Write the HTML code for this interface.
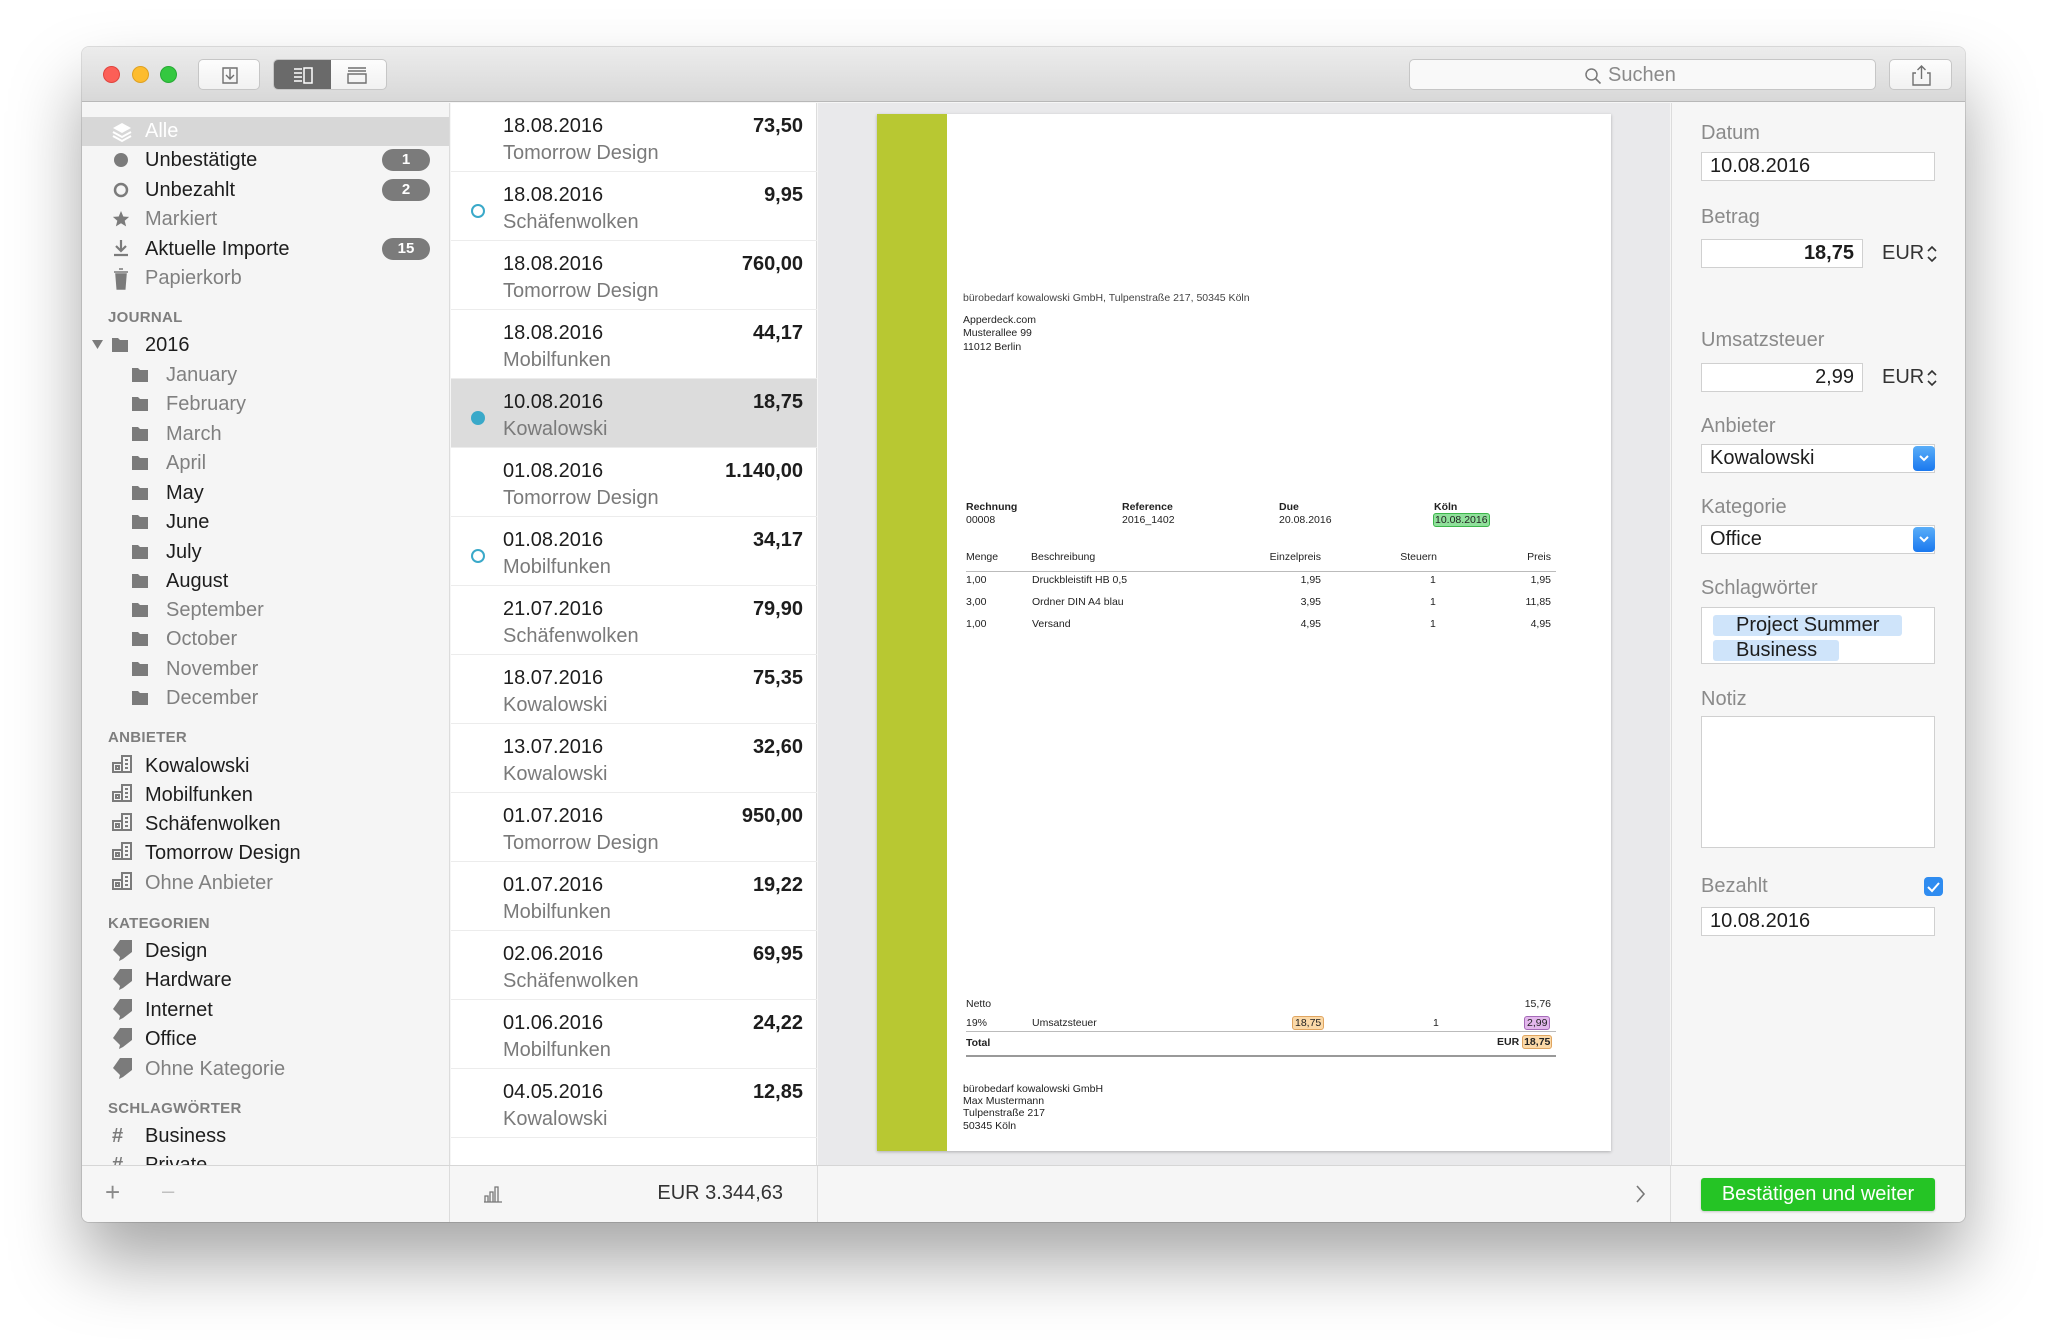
<!DOCTYPE html>
<html><head><meta charset="utf-8">
<style>
*{margin:0;padding:0;box-sizing:border-box}
body{width:2047px;height:1341px;background:#fff;font-family:"Liberation Sans",sans-serif;position:relative;overflow:hidden}
.abs{position:absolute}
.win{position:absolute;left:82px;top:47px;width:1883px;height:1175px;border-radius:7px;background:#f6f6f6;overflow:hidden;box-shadow:0 40px 70px rgba(0,0,0,.35),0 0 0 1px rgba(0,0,0,.12)}
.tb{position:absolute;left:0;top:0;width:100%;height:55px;background:linear-gradient(#ececec,#d8d8d8);border-bottom:1px solid #b8b8b8}
.light{position:absolute;top:19px;width:17px;height:17px;border-radius:50%}
.btn{position:absolute;top:12px;height:31px;background:linear-gradient(#fdfdfd,#f1f1f1);border:1px solid #c6c6c6;border-radius:5px}
.side{position:absolute;left:0;top:56px;width:368px;height:1062px;background:#f5f5f5;border-right:1px solid #dcdcdc;overflow:hidden}
.sc{position:absolute;left:0;top:2px;width:368px;height:1062px}
.si{position:absolute;font-size:20px;color:#1d1d1d;line-height:22px;white-space:nowrap}
.si.g{color:#808080}
.hd{position:absolute;font-size:15px;color:#7e7e7e;font-weight:bold;letter-spacing:.3px}
.badge{position:absolute;left:300px;width:48px;height:22px;border-radius:11px;background:#7b7b7b;color:#fff;font-size:15px;font-weight:bold;text-align:center;line-height:22px}
.list{position:absolute;left:369px;top:56px;width:366px;height:1062px;background:#fff;border-right:1px solid #dcdcdc}
.row{position:absolute;left:0;width:366px;height:69px;border-bottom:1px solid #ececec}
.row .d{position:absolute;left:52px;top:12px;font-size:20px;color:#1d1d1d}
.row .a{position:absolute;right:14px;top:12px;font-size:20px;font-weight:bold;color:#1d1d1d}
.row .n{position:absolute;left:52px;top:39px;font-size:20px;color:#7a7a7a}
.dot{position:absolute;left:20px;top:32px;width:14px;height:14px;border-radius:50%}
.prev{position:absolute;left:736px;top:56px;width:852px;height:1062px;background:#e9e9eb}
.right{position:absolute;left:1589px;top:56px;width:294px;height:1062px;background:#f6f6f6;border-left:1px solid #dcdcdc}
.lbl{position:absolute;left:29px;font-size:20px;color:#8a8a8a}
.fld{position:absolute;left:29px;width:234px;height:29px;background:#fff;border:1px solid #d0d0d0;font-size:20px;color:#1d1d1d;padding:2px 8px}
.bot{position:absolute;left:0;top:1118px;width:100%;height:57px;background:#f6f6f6;border-top:1px solid #d6d6d6}
.doc{position:absolute;left:877px;top:114px;width:734px;height:1037px;background:#fff;box-shadow:0 1px 3px rgba(0,0,0,.25)}
.t{position:absolute;font-size:10.5px;color:#222;white-space:nowrap;line-height:12px}
.tb2{font-weight:bold}
.r{text-align:right}
.sel{position:absolute;width:22px;height:25px;border-radius:4px;background:linear-gradient(#5aaef8,#1a78ef);right:-1px;top:1px}
</style></head><body>
<div class="win">
 <div class="tb">
  <div class="light" style="left:21px;background:#fc5f57;border:1px solid #e0443e"></div>
  <div class="light" style="left:50px;background:#fdbc2e;border:1px solid #dea123"></div>
  <div class="light" style="left:78px;background:#34c840;border:1px solid #27aa35"></div>
  <div class="btn" style="left:116px;width:62px"><svg width="62" height="31" viewBox="0 0 62 31"><path d="M24 8h14v15H24z M31 9v10 M27 15l4 4 4-4" fill="none" stroke="#707070" stroke-width="1.4"/></svg></div>
  <div class="btn" style="left:191px;width:114px;overflow:hidden">
   <div style="position:absolute;left:0;top:0;width:57px;height:100%;background:#6a6a6a"></div>
   <svg class="abs" style="left:0;top:0" width="114" height="31"><path d="M20 9h8M20 13h8M20 17h8M20 21h8M30 8h8v15h-8z" fill="none" stroke="#fff" stroke-width="1.5"/><path d="M74 8h18M74 11h18M74 14h18v9H74z" fill="none" stroke="#707070" stroke-width="1.4"/></svg>
  </div>
  <div class="btn" style="left:1327px;width:467px;background:#f9f9f9"><svg class="abs" style="left:174px;top:7px" width="18" height="18"><circle cx="7.5" cy="7.5" r="5.5" fill="none" stroke="#7a7a7a" stroke-width="1.5"/><path d="M11.5 11.5l5 5" stroke="#7a7a7a" stroke-width="1.6"/></svg><span class="abs" style="left:198px;top:4px;font-size:20px;color:#8a8a8a">Suchen</span></div>
  <div class="btn" style="left:1807px;width:63px"><svg width="63" height="31"><path d="M26 13h-3v12h17V13h-3 M31.5 19V6 M27.5 10l4-4 4 4" fill="none" stroke="#707070" stroke-width="1.4"/></svg></div>
 </div>

 <div class="side"><div class="sc">
  <div class="abs" style="left:0;top:12px;width:368px;height:29px;background:#d7d7d7"></div>
  <svg class="abs" style="left:28px;top:15px" width="24" height="24"><path d="M12 3l9 5-9 5-9-5z" fill="#fff"/><path d="M3 12l9 5 9-5M3 16l9 5 9-5" fill="none" stroke="#fff" stroke-width="2"/></svg>
  <div class="si" style="left:63px;top:15px;color:#fff">Alle</div>
  <svg class="abs" style="left:30px;top:45px" width="22" height="140"><circle cx="9" cy="10" r="7" fill="#7b7b7b"/><circle cx="9" cy="40" r="6" fill="none" stroke="#7b7b7b" stroke-width="2.5"/><path d="M9 61l2.3 5.5 5.8.4-4.4 3.8 1.4 5.7-5.1-3.1-5.1 3.1 1.4-5.7-4.4-3.8 5.8-.4z" fill="#7b7b7b"/><path d="M9 90v11M4 96l5 5 5-5M2 105h14" fill="none" stroke="#7b7b7b" stroke-width="2.2"/><path d="M2 122h14M4 124h10l-1.2 15H5.2z M7 119h4" fill="#7b7b7b" stroke="#7b7b7b" stroke-width="1.5"/></svg>
  <div class="si" style="left:63px;top:44px">Unbestätigte</div>
  <div class="si" style="left:63px;top:74px">Unbezahlt</div>
  <div class="si g" style="left:63px;top:103px">Markiert</div>
  <div class="si" style="left:63px;top:133px">Aktuelle Importe</div>
  <div class="si g" style="left:63px;top:162px">Papierkorb</div>
  <div class="badge" style="top:44px">1</div>
  <div class="badge" style="top:74px">2</div>
  <div class="badge" style="top:133px">15</div>
  <div class="hd" style="left:26px;top:204px">JOURNAL</div>
  <svg class="abs" style="left:9px;top:234px" width="14" height="12"><path d="M1 1h11L6.5 10z" fill="#7b7b7b"/></svg>
  <div class="si" style="left:63px;top:229px">2016</div>
  <div class="si g" style="left:84px;top:259px">January</div>
  <div class="si g" style="left:84px;top:288px">February</div>
  <div class="si g" style="left:84px;top:318px">March</div>
  <div class="si g" style="left:84px;top:347px">April</div>
  <div class="si" style="left:84px;top:377px">May</div>
  <div class="si" style="left:84px;top:406px">June</div>
  <div class="si" style="left:84px;top:436px">July</div>
  <div class="si" style="left:84px;top:465px">August</div>
  <div class="si g" style="left:84px;top:494px">September</div>
  <div class="si g" style="left:84px;top:523px">October</div>
  <div class="si g" style="left:84px;top:553px">November</div>
  <div class="si g" style="left:84px;top:582px">December</div>
  <svg class="abs" style="left:0;top:223px" width="90" height="380"><g fill="#7b7b7b">
   <path d="M30 10h6l2 2h8v12H30z"/>
   <path d="M50 40h6l2 2h8v12H50z"/><path d="M50 69h6l2 2h8v12H50z"/><path d="M50 99h6l2 2h8v12H50z"/><path d="M50 128h6l2 2h8v12H50z"/><path d="M50 158h6l2 2h8v12H50z"/><path d="M50 187h6l2 2h8v12H50z"/><path d="M50 217h6l2 2h8v12H50z"/><path d="M50 246h6l2 2h8v12H50z"/><path d="M50 275h6l2 2h8v12H50z"/><path d="M50 304h6l2 2h8v12H50z"/><path d="M50 334h6l2 2h8v12H50z"/><path d="M50 363h6l2 2h8v12H50z"/></g></svg>
  <div class="hd" style="left:26px;top:624px">ANBIETER</div>
  <div class="si" style="left:63px;top:650px">Kowalowski</div>
  <div class="si" style="left:63px;top:679px">Mobilfunken</div>
  <div class="si" style="left:63px;top:708px">Schäfenwolken</div>
  <div class="si" style="left:63px;top:737px">Tomorrow Design</div>
  <div class="si g" style="left:63px;top:767px">Ohne Anbieter</div>
  <svg class="abs" style="left:28px;top:647px" width="26" height="150"><g fill="none" stroke="#7b7b7b" stroke-width="2"><path d="M2 20h20M3 20v-9h9v9M12 20V4h9v16M6 14h3v3H6zM15 8h3M15 12h3M15 16h3"/><path d="M2 49h20M3 49v-9h9v9M12 49V33h9v16M6 43h3v3H6zM15 37h3M15 41h3M15 45h3"/><path d="M2 78h20M3 78v-9h9v9M12 78V62h9v16M6 72h3v3H6zM15 66h3M15 70h3M15 74h3"/><path d="M2 107h20M3 107v-9h9v9M12 107V91h9v16M6 101h3v3H6zM15 95h3M15 99h3M15 103h3"/><path d="M2 137h20M3 137v-9h9v9M12 137v-16h9v16M6 131h3v3H6zM15 125h3M15 129h3M15 133h3"/></g></svg>
  <div class="hd" style="left:26px;top:810px">KATEGORIEN</div>
  <div class="si" style="left:63px;top:835px">Design</div>
  <div class="si" style="left:63px;top:864px">Hardware</div>
  <div class="si" style="left:63px;top:894px">Internet</div>
  <div class="si" style="left:63px;top:923px">Office</div>
  <div class="si g" style="left:63px;top:953px">Ohne Kategorie</div>
  <svg class="abs" style="left:28px;top:833px" width="26" height="150"><g fill="#7b7b7b"><path d="M10 2h12v12l-9 7-4 2 1-4-7-7z"/><path d="M10 31h12v12l-9 7-4 2 1-4-7-7z"/><path d="M10 61h12v12l-9 7-4 2 1-4-7-7z"/><path d="M10 90h12v12l-9 7-4 2 1-4-7-7z"/><path d="M10 120h12v12l-9 7-4 2 1-4-7-7z"/></g></svg>
  <div class="hd" style="left:26px;top:995px">SCHLAGWÖRTER</div>
  <div class="si" style="left:30px;top:1020px;color:#7b7b7b;font-weight:bold">#</div>
  <div class="si" style="left:63px;top:1020px">Business</div>
  <div class="si" style="left:30px;top:1049px;color:#7b7b7b;font-weight:bold">#</div>
  <div class="si" style="left:63px;top:1049px">Private</div>
 </div></div>

 <div class="list">
  <div class="row" style="top:0"><div class="d">18.08.2016</div><div class="a">73,50</div><div class="n">Tomorrow Design</div></div>
  <div class="row" style="top:69px"><div class="d">18.08.2016</div><div class="a">9,95</div><div class="n">Schäfenwolken</div><div class="dot" style="border:2.5px solid #3aa9c9"></div></div>
  <div class="row" style="top:138px"><div class="d">18.08.2016</div><div class="a">760,00</div><div class="n">Tomorrow Design</div></div>
  <div class="row" style="top:207px"><div class="d">18.08.2016</div><div class="a">44,17</div><div class="n">Mobilfunken</div></div>
  <div class="row" style="top:276px;background:#dcdcdc"><div class="d">10.08.2016</div><div class="a">18,75</div><div class="n">Kowalowski</div><div class="dot" style="background:#3aa9c9"></div></div>
  <div class="row" style="top:345px"><div class="d">01.08.2016</div><div class="a">1.140,00</div><div class="n">Tomorrow Design</div></div>
  <div class="row" style="top:414px"><div class="d">01.08.2016</div><div class="a">34,17</div><div class="n">Mobilfunken</div><div class="dot" style="border:2.5px solid #3aa9c9"></div></div>
  <div class="row" style="top:483px"><div class="d">21.07.2016</div><div class="a">79,90</div><div class="n">Schäfenwolken</div></div>
  <div class="row" style="top:552px"><div class="d">18.07.2016</div><div class="a">75,35</div><div class="n">Kowalowski</div></div>
  <div class="row" style="top:621px"><div class="d">13.07.2016</div><div class="a">32,60</div><div class="n">Kowalowski</div></div>
  <div class="row" style="top:690px"><div class="d">01.07.2016</div><div class="a">950,00</div><div class="n">Tomorrow Design</div></div>
  <div class="row" style="top:759px"><div class="d">01.07.2016</div><div class="a">19,22</div><div class="n">Mobilfunken</div></div>
  <div class="row" style="top:828px"><div class="d">02.06.2016</div><div class="a">69,95</div><div class="n">Schäfenwolken</div></div>
  <div class="row" style="top:897px"><div class="d">01.06.2016</div><div class="a">24,22</div><div class="n">Mobilfunken</div></div>
  <div class="row" style="top:966px"><div class="d">04.05.2016</div><div class="a">12,85</div><div class="n">Kowalowski</div></div>
 </div>

 <div class="prev"></div>

 <div class="right">
  <div class="lbl" style="top:19px">Datum</div>
  <div class="fld" style="top:49px">10.08.2016</div>
  <div class="lbl" style="top:103px">Betrag</div>
  <div class="fld" style="top:136px;width:162px;text-align:right;font-weight:bold">18,75</div>
  <div class="abs" style="left:210px;top:139px;font-size:20px;color:#333">EUR</div>
  <svg class="abs" style="left:254px;top:140px" width="12" height="22"><path d="M2 8l4-4 4 4M2 14l4 4 4-4" fill="none" stroke="#333" stroke-width="1.6"/></svg>
  <div class="lbl" style="top:226px">Umsatzsteuer</div>
  <div class="fld" style="top:260px;width:162px;text-align:right">2,99</div>
  <div class="abs" style="left:210px;top:263px;font-size:20px;color:#333">EUR</div>
  <svg class="abs" style="left:254px;top:264px" width="12" height="22"><path d="M2 8l4-4 4 4M2 14l4 4 4-4" fill="none" stroke="#333" stroke-width="1.6"/></svg>
  <div class="lbl" style="top:312px">Anbieter</div>
  <div class="fld" style="top:341px">Kowalowski<div class="sel"><svg width="22" height="25"><path d="M7 10l4 4 4-4" fill="none" stroke="#fff" stroke-width="2"/></svg></div></div>
  <div class="lbl" style="top:393px">Kategorie</div>
  <div class="fld" style="top:422px">Office<div class="sel"><svg width="22" height="25"><path d="M7 10l4 4 4-4" fill="none" stroke="#fff" stroke-width="2"/></svg></div></div>
  <div class="lbl" style="top:474px">Schlagwörter</div>
  <div class="fld" style="top:504px;height:57px;padding:0">
   <div class="abs" style="left:11px;top:7px;width:189px;height:21px;background:#cfe4fa;border-radius:3px"></div>
   <div class="abs" style="left:11px;top:32px;width:126px;height:21px;background:#cfe4fa;border-radius:3px"></div>
   <div class="abs" style="left:34px;top:7px;font-size:20px;line-height:21px">Project Summer</div>
   <div class="abs" style="left:34px;top:32px;font-size:20px;line-height:21px">Business</div>
  </div>
  <div class="lbl" style="top:585px">Notiz</div>
  <div class="fld" style="top:613px;height:132px"></div>
  <div class="lbl" style="top:772px">Bezahlt</div>
  <div class="abs" style="left:252px;top:774px;width:19px;height:19px;border-radius:4px;background:#2f8cf0"><svg width="19" height="19"><path d="M4 10l4 4 7-8" fill="none" stroke="#fff" stroke-width="2"/></svg></div>
  <div class="fld" style="top:804px">10.08.2016</div>
 </div>

 <div class="bot">
  <div class="abs" style="left:367px;top:0;width:1px;height:57px;background:#dcdcdc"></div>
  <div class="abs" style="left:735px;top:0;width:1px;height:57px;background:#dcdcdc"></div>
  <div class="abs" style="left:1588px;top:0;width:1px;height:57px;background:#dcdcdc"></div>
  <div class="abs" style="left:23px;top:11px;font-size:26px;color:#8a8a8a;font-weight:300">+</div>
  <div class="abs" style="left:80px;top:12px;font-size:22px;color:#c0c0c0">–</div>
  <svg class="abs" style="left:400px;top:18px" width="22" height="20"><path d="M2 18h18M3 12h3v6H3zM8 8h3v10H8zM13 3h3v15h-3z" fill="none" stroke="#777" stroke-width="1.3"/></svg>
  <div class="abs" style="left:560px;top:16px;font-size:20px;color:#333;width:141px;text-align:right">EUR 3.344,63</div>
  <svg class="abs" style="left:1552px;top:17px" width="14" height="22"><path d="M3 3l7 8-7 8" fill="none" stroke="#777" stroke-width="1.6"/></svg>
  <div class="abs" style="left:1619px;top:12px;width:234px;height:33px;border-radius:3px;background:#25c425;color:#fff;font-size:20px;text-align:center;line-height:33px;box-shadow:0 1px 2px rgba(0,0,0,.2)">Bestätigen und weiter</div>
 </div>
</div>

<div class="doc">
 <div class="abs" style="left:0;top:0;width:70px;height:1037px;background:#b8c832"></div>
 <div class="t" style="left:86px;top:178px;color:#444">bürobedarf kowalowski GmbH, Tulpenstraße 217, 50345 Köln</div>
 <div class="t" style="left:86px;top:200px">Apperdeck.com</div>
 <div class="t" style="left:86px;top:213px">Musterallee 99</div>
 <div class="t" style="left:86px;top:227px">11012 Berlin</div>
 <div class="t tb2" style="left:89px;top:387px">Rechnung</div><div class="t" style="left:89px;top:400px">00008</div>
 <div class="t tb2" style="left:245px;top:387px">Reference</div><div class="t" style="left:245px;top:400px">2016_1402</div>
 <div class="t tb2" style="left:402px;top:387px">Due</div><div class="t" style="left:402px;top:400px">20.08.2016</div>
 <div class="t tb2" style="left:557px;top:387px">Köln</div><div class="t" style="left:556px;top:399px;background:#8fe09a;border:1px solid #3cb54a;border-radius:3px;padding:0 1px">10.08.2016</div>
 <div class="t" style="left:89px;top:437px">Menge</div><div class="t" style="left:154px;top:437px">Beschreibung</div>
 <div class="t r" style="left:364px;top:437px;width:80px">Einzelpreis</div>
 <div class="t r" style="left:480px;top:437px;width:80px">Steuern</div>
 <div class="t r" style="left:594px;top:437px;width:80px">Preis</div>
 <div class="abs" style="left:89px;top:457px;width:590px;height:1px;background:#bbb"></div>
 <div class="t" style="left:89px;top:460px">1,00</div><div class="t" style="left:155px;top:460px">Druckbleistift HB 0,5</div><div class="t r" style="left:364px;top:460px;width:80px">1,95</div><div class="t" style="left:553px;top:460px">1</div><div class="t r" style="left:594px;top:460px;width:80px">1,95</div>
 <div class="t" style="left:89px;top:482px">3,00</div><div class="t" style="left:155px;top:482px">Ordner DIN A4 blau</div><div class="t r" style="left:364px;top:482px;width:80px">3,95</div><div class="t" style="left:553px;top:482px">1</div><div class="t r" style="left:594px;top:482px;width:80px">11,85</div>
 <div class="t" style="left:89px;top:504px">1,00</div><div class="t" style="left:155px;top:504px">Versand</div><div class="t r" style="left:364px;top:504px;width:80px">4,95</div><div class="t" style="left:553px;top:504px">1</div><div class="t r" style="left:594px;top:504px;width:80px">4,95</div>
 <div class="t" style="left:89px;top:884px">Netto</div><div class="t r" style="left:594px;top:884px;width:80px">15,76</div>
 <div class="t" style="left:89px;top:903px">19%</div><div class="t" style="left:155px;top:903px">Umsatzsteuer</div>
 <div class="t" style="left:415px;top:902px;background:#fbd9a8;border:1px solid #e0a560;border-radius:3px;padding:0 2px">18,75</div>
 <div class="t" style="left:556px;top:903px">1</div>
 <div class="t" style="left:647px;top:902px;background:#e3b8ec;border:1px solid #a56ab8;border-radius:3px;padding:0 2px">2,99</div>
 <div class="abs" style="left:89px;top:917px;width:590px;height:1px;background:#bbb"></div>
 <div class="t tb2" style="left:89px;top:923px">Total</div>
 <div class="t tb2" style="left:620px;top:922px">EUR <span style="background:#fbd9a8;border:1px solid #e0a560;border-radius:3px;padding:0 1px">18,75</span></div>
 <div class="abs" style="left:89px;top:941px;width:590px;height:2px;background:#999"></div>
 <div class="t" style="left:86px;top:969px">bürobedarf kowalowski GmbH</div>
 <div class="t" style="left:86px;top:981px">Max Mustermann</div>
 <div class="t" style="left:86px;top:993px">Tulpenstraße 217</div>
 <div class="t" style="left:86px;top:1006px">50345 Köln</div>
</div>
</body></html>
